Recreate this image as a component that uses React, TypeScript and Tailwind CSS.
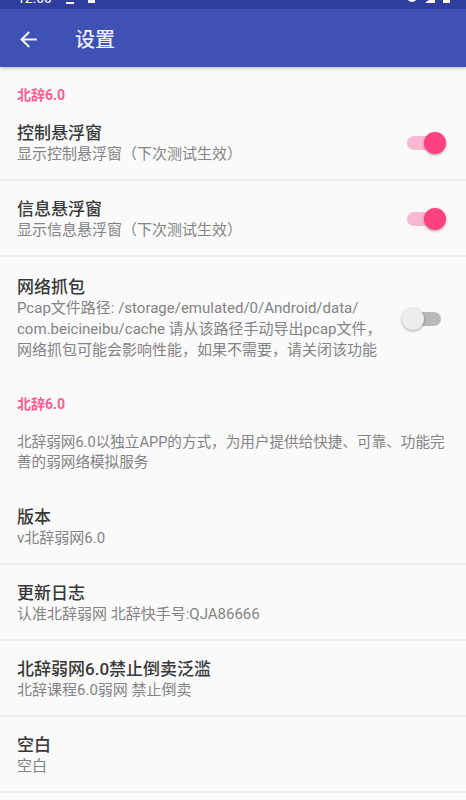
import React from 'react'

const FONT = 'font-["Roboto","Noto_Sans_CJK_SC",sans-serif]'

function Switch({ on }: { on: boolean }) {
  return (
    <div className="relative h-[22px] w-[44px] shrink-0">
      <div
        className={`absolute left-[5px] top-[4px] h-[14px] w-[34px] rounded-full ${
          on ? 'bg-[#f9b8cf]' : 'bg-[#b9b9b9]'
        }`}
      />
      <div
        className={`absolute top-0 h-[22px] w-[22px] rounded-full shadow-[0_1px_3px_rgba(0,0,0,0.35)] ${
          on ? 'left-[22px] bg-[#ff4081]' : 'left-0 bg-[#ededed]'
        }`}
      />
    </div>
  )
}

function Header({ className = '' }: { className?: string }) {
  return (
    <div className={`px-[17px] text-[14px] font-bold leading-[20px] text-[#ff5c93] ${className}`}>
      北辞6.0
    </div>
  )
}

function Item({
  title,
  summary,
  divider = true,
}: {
  title: string
  summary: string
  divider?: boolean
}) {
  return (
    <div className={`px-[17px] pt-[17px] pb-[15px] ${divider ? 'border-b-2 border-[#ececec]' : ''}`}>
      <div className="text-[17px] font-medium leading-[22px] text-[#383838]">{title}</div>
      <div className="text-[15px] leading-[20px] text-[#838383]">{summary}</div>
    </div>
  )
}

function SwitchItem({ title, summary, on }: { title: string; summary: string; on: boolean }) {
  return (
    <div className="flex items-center border-b-2 border-[#ececec] pl-[17px] pr-[20px] pt-[17px] pb-[15px]">
      <div className="min-w-0 flex-1">
        <div className="text-[17px] font-medium leading-[22px] text-[#383838]">{title}</div>
        <div className="text-[15px] leading-[20px] text-[#838383]">{summary}</div>
      </div>
      <Switch on={on} />
    </div>
  )
}

export default function App() {
  return (
    <div className={`min-h-[800px] w-full bg-[#fafafa] ${FONT}`}>
      {/* status bar, cut off at the top */}
      <div className="h-[9px] overflow-hidden bg-[#303f9f]">
        <div className="-mt-[10px] flex items-end justify-between pl-[17px] pr-[16px] text-[14px] leading-[16px] text-white">
          <div className="flex items-end gap-[14px]">
            <span>12:00</span>
            <span className="mb-[2px] h-[2px] w-[8px] bg-white" />
            <span className="mb-[3px] h-[8px] w-[7px] bg-white" />
          </div>
          <div className="flex items-end gap-[8px]">
            <span className="mb-[4px] h-[6px] w-[10px] rounded-b-full bg-white" />
            <span className="mb-[3px] h-[8px] w-[10px] bg-white [clip-path:polygon(100%_0,100%_100%,0_100%)]" />
            <span className="mb-[3px] h-[10px] w-[7px] bg-white" />
          </div>
        </div>
      </div>

      {/* toolbar */}
      <div className="flex h-[58px] items-center bg-[#3f51b5] pt-[3px] pl-[16px] shadow-[0_2px_3px_rgba(0,0,0,0.18)]">
        <svg width="25" height="25" viewBox="0 0 24 24" fill="#eef0fa">
          <path d="M20 11H7.83l5.59-5.59L12 4l-8 8 8 8 1.41-1.41L7.83 13H20v-2z" />
        </svg>
        <span className="ml-[34px] text-[20px] font-medium leading-[26px] text-[#eef0fa]">设置</span>
      </div>

      <Header className="pt-[18px]" />
      <SwitchItem title="控制悬浮窗" summary="显示控制悬浮窗（下次测试生效）" on />
      <SwitchItem title="信息悬浮窗" summary="显示信息悬浮窗（下次测试生效）" on />

      <div className="flex items-center pl-[17px] pr-[20px] pt-[19px] pb-[16px]">
        <div className="min-w-0 flex-1">
          <div className="text-[17px] font-medium leading-[22px] text-[#383838]">网络抓包</div>
          <div className="whitespace-nowrap text-[15px] leading-[21px] text-[#838383]">
            Pcap文件路径: /storage/emulated/0/Android/data/
            <br />
            com.beicineibu/cache 请从该路径手动导出pcap文件，
            <br />
            网络抓包可能会影响性能，如果不需要，请关闭该功能
          </div>
        </div>
        <Switch on={false} />
      </div>

      <Header className="pt-[17px]" />
      <div className="whitespace-nowrap px-[17px] pt-[18px] pb-[17px] text-[14.6px] leading-[20px] text-[#838383]">
        北辞弱网6.0以独立APP的方式，为用户提供给快捷、可靠、功能完
        <br />
        善的弱网络模拟服务
      </div>

      <Item title="版本" summary="v北辞弱网6.0" />
      <Item title="更新日志" summary="认准北辞弱网 北辞快手号:QJA86666" />
      <Item title="北辞弱网6.0禁止倒卖泛滥" summary="北辞课程6.0弱网 禁止倒卖" />
      <Item title="空白" summary="空白" />
    </div>
  )
}
